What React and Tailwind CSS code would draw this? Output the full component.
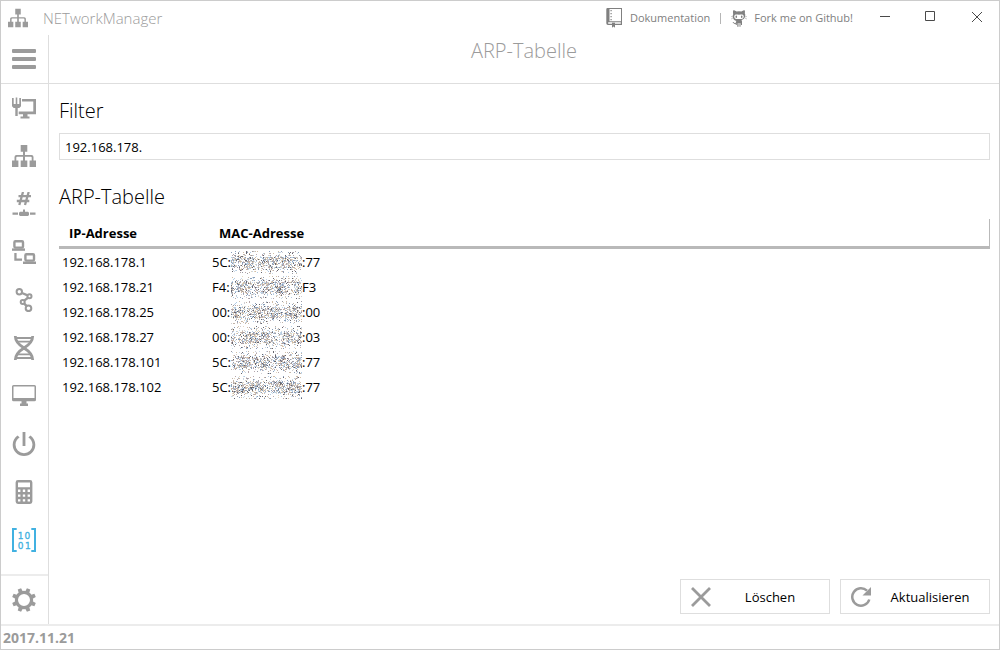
import React, { useState } from "react";

const entries = [
  { ip: "192.168.178.1", start: "5C:", end: ":77" },
  { ip: "192.168.178.21", start: "F4:", end: "F3" },
  { ip: "192.168.178.25", start: "00:", end: ":00" },
  { ip: "192.168.178.27", start: "00:", end: ":03" },
  { ip: "192.168.178.101", start: "5C:", end: ":77" },
  { ip: "192.168.178.102", start: "5C:", end: ":77" },
];

const speckleColors = ["#9c9ca4", "#d2bea6", "#b4cde4", "#66666f", "#cfcfd4", "#b5a6ac", "#e3d6c0", "#8a9fba", "#c9d9e8", "#c2b4a8"];

/* Scattered pixels that hide the middle octets of an address. */
function Speckles({ seed }) {
  let s = seed * 7919 + 13;
  const rand = () => {
    s = (s * 1103515245 + 12345) % 2147483648;
    return s / 2147483648;
  };
  const paths = speckleColors.map(() => "");
  for (let y = 0; y < 23; y++) {
    for (let x = 0; x < 71; x++) {
      const wave = 0.12 * Math.sin(x / 3 + seed * 2) + 0.08 * Math.sin(x / 7 + seed);
      const density = y > 5 && y < 17 ? 0.58 + wave : y > 3 && y < 19 ? 0.3 : 0.17;
      const hit = rand() < density;
      const c = Math.floor(rand() * speckleColors.length);
      if (hit) paths[c] += `M${x} ${y}h1v1h-1z`;
    }
  }
  return (
    <svg width="71" height="23" viewBox="0 0 71 23" shapeRendering="crispEdges" className="shrink-0" aria-hidden="true">
      {paths.map((d, i) => (
        <path key={i} d={d} fill={speckleColors[i]} />
      ))}
    </svg>
  );
}

function Icon({ children, size = 24 }) {
  return (
    <svg width={size} height={size} viewBox="0 0 24 24" fill="currentColor" aria-hidden="true">
      {children}
    </svg>
  );
}

const line = { fill: "none", stroke: "currentColor" };

const Tree = ({ size }) => (
  <Icon size={size}>
    <path d="M8.7 1h6.6v6.7H13V11h6.5a2 2 0 0 1 2 2v3.6H24V23h-6.4v-6.4h2.1V13.5a.8.8 0 0 0-.8-.8H13v3.9h2.3V23H8.7v-6.4H11v-3.9H5.1a.8.8 0 0 0-.8.8v3.1h2.1V23H0v-6.4h2.5V13a2 2 0 0 1 2-2H11V7.7H8.7z" />
  </Icon>
);

const Bars = () => (
  <Icon>
    <rect y="2" width="24" height="4" rx="1" />
    <rect y="10" width="24" height="4" rx="1" />
    <rect y="18" width="24" height="4" rx="1" />
  </Icon>
);

const NetworkInterface = () => (
  <Icon>
    <path d="M0 2h1.7v6h2V1.4h1.6V8h2V2H9v8.3L7.3 12H5.7v8H3.3v-8H1.7L0 10.3z" />
    <path d="M10 3h14v15.200H6.700v-2.700h14.600V5.600H10z" />
    <path d="M11 18h4.500v2.500h2v2h-9v-2H11z" />
  </Icon>
);

const Subnet = () => (
  <Icon>
    <path {...line} strokeWidth="2.300" d="M11 0 7.300 13M16.700 0 13 13M6.500 4.200h12.500M4.800 9h12.500" />
    <path d="M11 17.500h2v2.200h3l1 1V23l-1 1H8l-1-1v-2.300l1-1h3z" />
    <path d="M.5 20.500H6v2.300H.5zM18 20.500h5.500v2.300H18z" />
  </Icon>
);

const Laptops = () => (
  <Icon>
    <rect {...line} strokeWidth="2.400" x="2.400" y="1.200" width="8.600" height="6.400" rx="1" />
    <path d="M0 8.400h13v2.400H0z" />
    <rect {...line} strokeWidth="2.400" x="13.400" y="14.200" width="8.600" height="6.400" rx="1" />
    <path d="M11 21.600h13V24H11zM2.300 13h2.300v5.400H10v2.300H2.300z" />
  </Icon>
);

const Route = () => (
  <Icon>
    <g {...line} strokeWidth="2">
      <circle cx="7.300" cy="3.700" r="2.700" />
      <circle cx="17.500" cy="8.300" r="2" />
      <circle cx="10.700" cy="14.100" r="2" />
      <circle cx="16.500" cy="20.300" r="2.800" />
      <path strokeWidth="2.400" d="m10 5 5.600 2.300M16 9.800 12.200 12.600M12.200 15.600l2.300 2.300" />
    </g>
  </Icon>
);

const Dna = () => (
  <Icon>
    <path {...line} strokeWidth="2.800" d="M3.300 0c0 5.500 3 8.500 8.700 12s8.700 6.500 8.700 12M20.700 0c0 5.500-3 8.500-8.700 12s-8.700 6.500-8.700 12" />
    <path {...line} strokeWidth="1.800" d="M5 2h14M6 5.700h12M6 18.300h12M5 22h14" />
  </Icon>
);

const Monitor = () => (
  <Icon>
    <path fillRule="evenodd" d="M1.500 1h21A1.500 1.500 0 0 1 24 2.500v13.300a1.500 1.500 0 0 1-1.500 1.500h-21A1.500 1.500 0 0 1 0 15.800V2.500A1.500 1.500 0 0 1 1.500 1zM1.500 2.500V14h21V2.500z" />
    <path d="M9.500 17h5v2.500H16V22H8v-2.500h1.500z" />
  </Icon>
);

const Power = () => (
  <svg width="24" height="24" viewBox="4 3 16 17" fill="currentColor" aria-hidden="true">
    <path d="M16.560 5.440 15.110 6.890C16.840 7.940 18 9.830 18 12a6 6 0 0 1-12 0c0-2.170 1.160-4.060 2.880-5.120L7.440 5.440C5.360 6.880 4 9.280 4 12a8 8 0 0 0 16 0c0-2.720-1.360-5.120-3.440-6.560M13 3h-2v10h2" />
  </svg>
);

const Calculator = () => (
  <svg width="24" height="24" viewBox="2 2 20 20" fill="currentColor" aria-hidden="true">
    <path
      fillRule="evenodd"
      d="M7 2h10a2 2 0 0 1 2 2v16a2 2 0 0 1-2 2H7a2 2 0 0 1-2-2V4a2 2 0 0 1 2-2M7 4v4h10V4H7M7 10v2h2v-2H7M11 10v2h2v-2h-2M15 10v2h2v-2h-2M7 14v2h2v-2H7M11 14v2h2v-2h-2M15 14v2h2v-2h-2M7 18v2h2v-2H7M11 18v2h2v-2h-2M15 18v2h2v-2h-2"
    />
  </svg>
);

const Binary = () => (
  <Icon>
    <path d="M0 0h4.700v2H2v20h2.700v2H0zM24 0h-4.700v2H22v20h-2.700v2H24z" />
    <g className="font-['DejaVu_Sans']" fontSize="9" textAnchor="middle" stroke="currentColor" strokeWidth=".3">
      <text x="8.600" y="10.500">1</text>
      <text x="15.300" y="10.500">0</text>
      <text x="8.600" y="20.500">0</text>
      <text x="15.800" y="20.500">1</text>
    </g>
  </Icon>
);

const Gear = () => (
  <Icon>
    <circle {...line} strokeWidth="3.200" cx="12" cy="12" r="7.600" />
    {[22.5, 67.5, 112.5, 157.5, 202.5, 247.5, 292.5, 337.5].map((a) => (
      <path key={a} d="M9.800 4 10.200 0h3.600l.4 4z" transform={`rotate(${a} 12 12)`} />
    ))}
  </Icon>
);

const Book = () => (
  <svg width="17" height="20" viewBox="0 0 17 20" fill="currentColor" aria-hidden="true">
    <path fillRule="evenodd" d="M1.500 0H16v17H9v2.700l-1.500-1.200L6 19.700V17H2a1.700 1.700 0 0 1-1.700-1.700V1.200A1.200 1.200 0 0 1 1.500 0zM3.500 1v12.300H15V1zM2.200 14.300v1.500H6v-1h3v1h5.800v-1.500z" />
    <path d="M4.500 2h1.200v1.200H4.500zM4.500 5h1.200v1.200H4.500zM4.500 8h1.200v1.200H4.500zM4.500 11h1.200v1.200H4.500z" />
  </svg>
);

const Octocat = () => (
  <svg width="16" height="17" viewBox="0 0 16 17" fill="currentColor" aria-hidden="true">
    <path
      fillRule="evenodd"
      d="M2.300.3C3.500.3 4.700.9 5.500 1.500a11 11 0 0 1 5 0C11.300.9 12.500.3 13.700.3c.4 1 .4 2 .1 2.900.5.900.6 1.800.4 2.900-.3 2.200-1.600 3.600-3.800 3.900.5.500.6 1 .6 1.800V15h-1v-1.800h-.5v3.500H8.500V13h-1v3.700H6.300v-3.500h-.5V15h-1v-.9c-1.500.2-2-.5-2.500-1.300l-.9-.8c1.200-.3 1.700.4 2.100.9.4.400.8.400 1.300.2 0-1.200.1-1.600.8-2.100-2.200-.3-3.500-1.700-3.800-3.900-.2-1.100-.1-2 .4-2.900C1.900 2.300 1.900 1.300 2.300.3zM4.200 4.700c-1.600.9-1.200 4 1.300 4.300h5c2.500-.3 2.900-3.400 1.300-4.300-1.200-.5-2.400 0-3.800 0s-2.600-.5-3.800 0z"
    />
    <ellipse cx="5.300" cy="6.700" rx=".8" ry="1.200" />
    <ellipse cx="10.700" cy="6.700" rx=".8" ry="1.200" />
    <path {...line} strokeWidth=".4" d="M0 6.500l2 .3M0 9l2-.8M16 6.500l-2 .3M16 9l-2-.8" />
  </svg>
);

const tools = [
  { label: "Netzwerkschnittstelle", Draw: NetworkInterface },
  { label: "IP-Scanner", Draw: Tree },
  { label: "Subnetzrechner", Draw: Subnet },
  { label: "Ping", Draw: Laptops },
  { label: "Traceroute", Draw: Route },
  { label: "DNS-Lookup", Draw: Dna },
  { label: "Remotedesktop", Draw: Monitor },
  { label: "Wake on LAN", Draw: Power },
  { label: "Rechner", Draw: Calculator },
  { label: "ARP-Tabelle", Draw: Binary, active: true },
];

function ToolButton({ label, active, children }) {
  return (
    <button
      type="button"
      aria-label={label}
      className={`flex h-12 w-full items-center pl-[11px] ${active ? "text-[#41b1e1]" : "text-[#9b9b9b]"}`}
    >
      {children}
    </button>
  );
}

function WindowButton({ label, children }) {
  return (
    <button type="button" aria-label={label} className="flex h-8 w-[46px] items-center justify-center text-[#4a4a4a]">
      <svg width="14" height="14" viewBox="0 0 14 14" fill="none" stroke="currentColor" aria-hidden="true">
        {children}
      </svg>
    </button>
  );
}

function ActionButton({ label, icon }) {
  return (
    <button type="button" className="flex h-[35px] w-[150px] items-center border border-[#dedede] pl-[10px] text-[13px] text-black">
      <span className="text-[#9b9b9b]">{icon}</span>
      <span className="flex-1 pt-[2px] text-center">{label}</span>
    </button>
  );
}

export default function App() {
  const [filter, setFilter] = useState("192.168.178.");
  const rows = entries.filter((e) => e.ip.includes(filter));

  return (
    <div className="flex min-h-screen flex-col border border-[#cccccc] bg-white font-['Open_Sans','Noto_Sans',sans-serif] text-[13px] text-black">
      <header className="flex h-[34px] items-center">
        <div className="flex flex-1 items-center gap-[15px] pl-[7px] text-[#9b9b9b]">
          <Tree size={20} />
          <span className="text-[15px] font-light">NETworkManager</span>
        </div>
        <nav className="flex items-center text-[11px] text-[#808080]">
          <a href="#docs" className="flex items-center gap-[7px]">
            <Book />
            Dokumentation
          </a>
          <span className="mx-[10px] h-[11px] w-px bg-[#b5b5b5]" />
          <a href="#github" className="flex items-center gap-[7px]">
            <Octocat />
            Fork me on Github!
          </a>
        </nav>
        <div className="flex self-start pl-2">
          <WindowButton label="Minimieren">
            <path d="M3 6.500h10" />
          </WindowButton>
          <WindowButton label="Maximieren">
            <path d="M2.500 1.500h9v9h-9z" />
          </WindowButton>
          <WindowButton label="Schließen">
            <path d="M3 2l10 10M13 2 3 12" />
          </WindowButton>
        </div>
      </header>

      <div className="flex flex-1">
        <aside className="flex w-12 flex-col border-r border-[#dedede]">
          <div className="border-b border-[#dedede]">
            <ToolButton label="Menü">
              <Bars />
            </ToolButton>
          </div>
          <nav className="flex flex-1 flex-col">
            {tools.map(({ label, Draw, active }) => (
              <ToolButton key={label} label={label} active={active}>
                <Draw />
              </ToolButton>
            ))}
          </nav>
          <div className="border-t-2 border-[#ececec]">
            <ToolButton label="Einstellungen">
              <Gear />
            </ToolButton>
          </div>
        </aside>

        <div className="flex flex-1 flex-col">
          <div className="h-[49px] border-b border-[#dedede] text-center">
            <h1 className="text-[20px] leading-8 font-light text-[#9b9b9b]">ARP-Tabelle</h1>
          </div>
          <main className="flex flex-1 flex-col pt-[13px] pr-[9px] pb-[10px] pl-[10px]">
            <label htmlFor="filter" className="text-[20px] leading-7 font-light">
              Filter
            </label>
            <input
              id="filter"
              type="text"
              value={filter}
              onChange={(e) => setFilter(e.target.value)}
              className="mt-2 h-[27px] w-full border border-[#dedede] px-[5px] outline-none"
            />
            <h2 className="mt-[23px] text-[20px] leading-7 font-light">ARP-Tabelle</h2>
            <table className="mt-2 w-full border-separate border-spacing-0 text-left">
              <thead>
                <tr className="h-[30px]">
                  <th className="w-[150px] border-b-[3px] border-[#b9b9b9] px-[10px] pt-[2px] pb-0 font-bold">IP-Adresse</th>
                  <th className="border-r border-b-[3px] border-[#b9b9b9] px-[10px] pt-[2px] pb-0 font-bold">MAC-Adresse</th>
                </tr>
              </thead>
              <tbody>
                {rows.map((e, i) => (
                  <tr key={e.ip} className="h-[25px]">
                    <td className="px-[3px] pt-[2px] pb-0">{e.ip}</td>
                    <td className="px-[3px] pt-[2px] pb-0">
                      <span className="flex items-center">
                        <span className="w-[19px]">{e.start}</span>
                        <Speckles seed={i + 1} />
                        <span>{e.end}</span>
                      </span>
                    </td>
                  </tr>
                ))}
              </tbody>
            </table>
            <div className="mt-auto flex justify-end gap-[10px]">
              <ActionButton
                label="Löschen"
                icon={
                  <svg width="20" height="20" viewBox="0 0 20 20" fill="none" stroke="currentColor" strokeWidth="2.800" aria-hidden="true">
                    <path d="M1 1l18 18M19 1 1 19" />
                  </svg>
                }
              />
              <ActionButton
                label="Aktualisieren"
                icon={
                  <svg width="20" height="20" viewBox="0 0 20 20" fill="none" stroke="currentColor" strokeWidth="2.500" aria-hidden="true">
                    <path d="M18.300 12.500A8.700 8.700 0 1 1 16 3.700" />
                    <path stroke="none" fill="currentColor" d="M20 0v8.500h-8.500z" />
                  </svg>
                }
              />
            </div>
          </main>
        </div>
      </div>

      <footer className="h-[25px] border-t-2 border-[#ececec] px-[2px] text-[14px] leading-6 font-bold text-[#9b9b9b]">2017.11.21</footer>
    </div>
  );
}
